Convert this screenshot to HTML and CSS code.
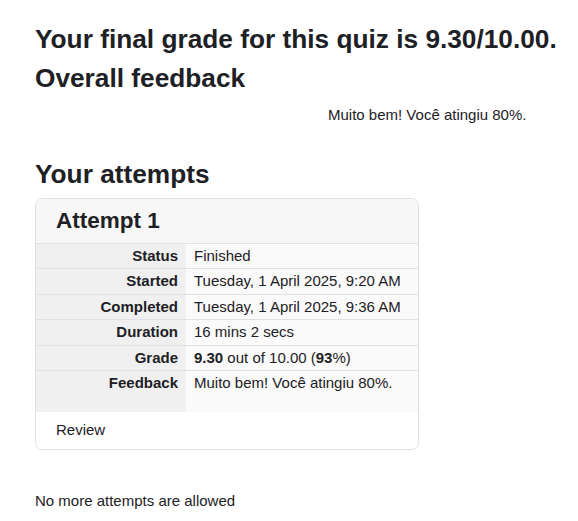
FILE: index.html
```html
<!DOCTYPE html>
<html>
<head>
<meta charset="utf-8">
<link rel="stylesheet" href="styles.css">
</head>
<body>
<div class="page">
  <h3 class="heading">Your final grade for this quiz is 9.30/10.00.</h3>
  <h3 class="heading">Overall feedback</h3>
  <div class="overall">Muito bem! Você atingiu 80%.</div>
  <h3 class="heading attempts-title">Your attempts</h3>
  <div class="card">
    <div class="card-header"><h3 class="card-title">Attempt 1</h3></div>
    <table class="summary">
      <tr><th>Status</th><td>Finished</td></tr>
      <tr><th>Started</th><td>Tuesday, 1 April 2025, 9:20 AM</td></tr>
      <tr><th>Completed</th><td>Tuesday, 1 April 2025, 9:36 AM</td></tr>
      <tr><th>Duration</th><td>16 mins 2 secs</td></tr>
      <tr><th>Grade</th><td><b>9.30</b> out of 10.00 (<b>93</b>%)</td></tr>
      <tr class="fb-row"><th>Feedback</th><td><p>Muito bem! Você atingiu 80%.</p></td></tr>
    </table>
    <div class="card-footer"><a class="review" href="#">Review</a></div>
  </div>
  <div class="nomore">No more attempts are allowed</div>
</div>
</body>
</html>
```
FILE: styles.css
```css
html, body {
  margin: 0;
  padding: 0;
  background: #fff;
}
body {
  font-family: "Liberation Sans", Arial, sans-serif;
  font-size: 15px;
  line-height: 1.5;
  color: #1d2125;
}
.page {
  padding: 24px 0 0 35px;
}
.heading {
  font-size: 26.25px;
  line-height: 1.2;
  font-weight: 700;
  margin: 0 0 7.5px 0;
}
.overall {
  margin: 9px 0 0 293px;
  height: 22.5px;
}
.attempts-title {
  margin-top: 33px;
  margin-bottom: 7px;
}
.card {
  width: 382px;
  border: 1px solid #dee2e6;
  border-radius: 7px;
  overflow: hidden;
}
.card-header {
  background: #f7f7f7;
  padding: 8.5px 20px 8.5px 20px;
}
.card-title {
  margin: 0;
  font-size: 22.5px;
  line-height: 27px;
  font-weight: 700;
}
.summary {
  width: 100%;
  border-collapse: collapse;
}
.summary th, .summary td {
  border-top: 1px solid #dee2e6;
  padding: 1px 8px 1px 8px;
  vertical-align: top;
  line-height: 22.5px;
}
.summary th {
  width: 134px;
  text-align: right;
  background: #f0f0f0;
  font-weight: 700;
}
.summary td {
  background: #fafafa;
  text-align: left;
}
.summary p {
  margin: 0 0 16px 0;
}
.card-footer {
  padding: 7.5px 21px 7.5px 20px;
  line-height: 22.5px;
}
.review {
  color: #1d2125;
  text-decoration: none;
}
.nomore {
  margin-top: 40px;
}
```
